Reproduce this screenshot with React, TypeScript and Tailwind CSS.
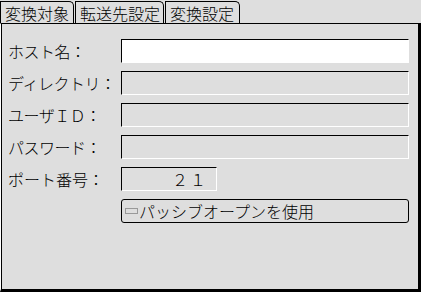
import React from 'react';

const font = { fontFamily: '"Noto Sans CJK JP", "Noto Sans", sans-serif' };

const tabs = [
  { label: '変換対象', width: 'w-[74px]' },
  { label: '転送先設定', width: 'w-[89px]', active: true },
  { label: '変換設定', width: 'w-[75px]' },
];

const fields = [
  { label: 'ホスト名：', white: true },
  { label: 'ディレクトリ：' },
  { label: 'ユーザＩＤ：' },
  { label: 'パスワード：' },
];

export default function App() {
  return (
    <div className="w-[421px] h-[292px] bg-[#dedede] flex flex-col text-black leading-none font-light" style={font}>
      {/* Tabs */}
      <div className="flex h-[23px] items-end gap-[1px] shrink-0">
        {tabs.map(t => (
          <div
            key={t.label}
            className={`${t.width} h-[22px] border border-b-0 border-black rounded-tr-[5px] flex items-center pl-[4px] text-[16px] bg-[#dedede]`}
          >
            {t.label}
          </div>
        ))}
      </div>

      {/* Panel */}
      <div className="flex-1 border-t border-t-black border-l border-l-white border-r-[3px] border-r-black border-b-[3px] border-b-black shadow-[inset_1px_0_0_#000] pt-[15px] pl-[7px] pr-[9px] flex flex-col gap-[8px]">
        {fields.map(f => (
          <div key={f.label} className="flex items-center h-[24px]">
            <div className="w-[113px] text-[16px] tracking-[-0.5px] whitespace-nowrap">{f.label}</div>
            <div
              className={`flex-1 h-[24px] border border-t-black border-l-black border-r-white border-b-white ${f.white ? 'bg-white' : 'bg-[#dedede]'}`}
            />
          </div>
        ))}

        <div className="flex items-center h-[24px]">
          <div className="w-[113px] text-[16px] whitespace-nowrap">ポート番号：</div>
          <div className="w-[96px] h-[24px] border border-t-black border-l-black border-r-white border-b-white bg-[#dedede] flex items-center justify-end pr-[8px] text-[16px] tracking-[2px]">
            ２１
          </div>
        </div>

        <div className="flex items-center h-[24px]">
          <div className="w-[113px]" />
          <div className="flex-1 h-[24px] border border-black rounded-[3px] flex items-center pl-[3px] text-[16px] gap-[1px]">
            <svg width="13" height="6" viewBox="0 0 13 6" className="shrink-0">
              <rect x="0.5" y="0.5" width="12" height="5" fill="none" stroke="#555" strokeWidth="1" strokeDasharray="1 1" />
            </svg>
            パッシブオープンを使用
          </div>
        </div>
      </div>
    </div>
  );
}
